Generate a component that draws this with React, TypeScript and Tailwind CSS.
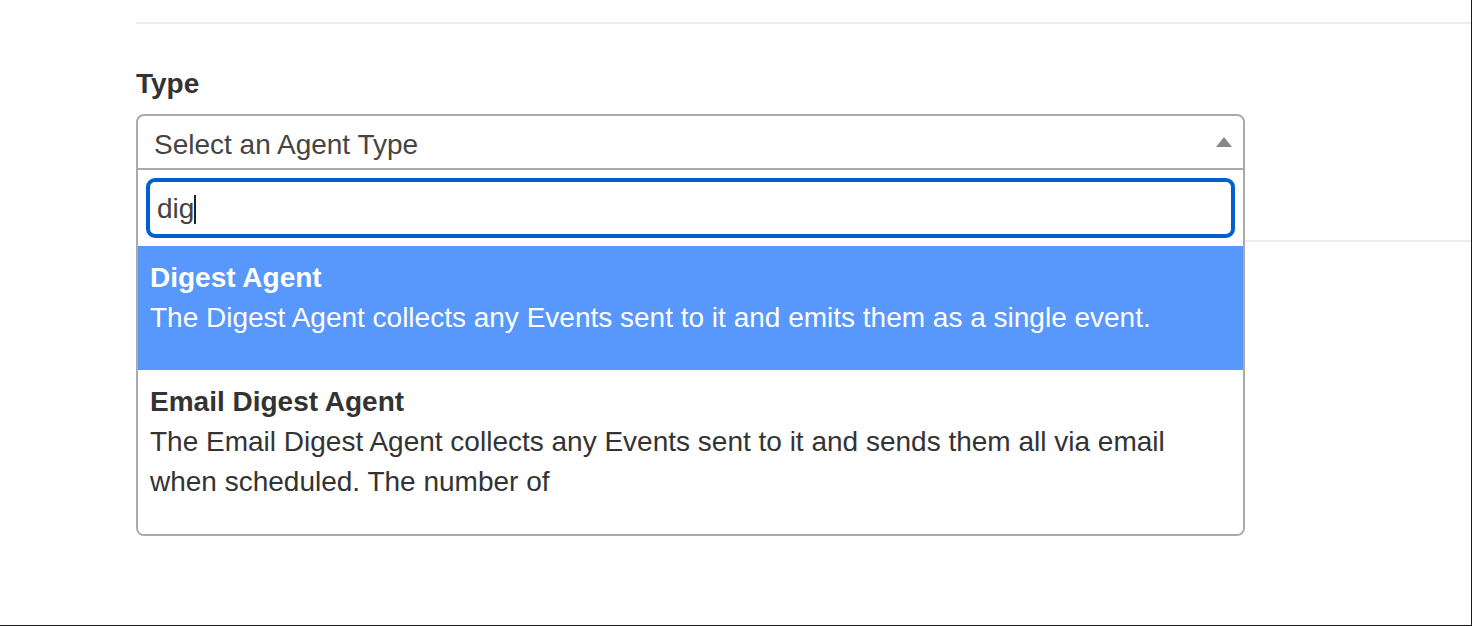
const options = [
  {
    title: "Digest Agent",
    lines: ["The Digest Agent collects any Events sent to it and emits them as a single event."],
    active: true,
  },
  {
    title: "Email Digest Agent",
    lines: [
      "The Email Digest Agent collects any Events sent to it and sends them all via email",
      "when scheduled. The number of",
    ],
    active: false,
  },
];

export default function App() {
  return (
    <div className="w-[1472px] h-[626px] overflow-hidden bg-white border-r border-b border-[#1c1c1c] font-['Liberation_Sans',Arial,sans-serif] text-[#333]">
      <div className="pl-[136px] pt-[22px]">
        <div className="h-[2px] bg-[#eeeeee]" />

        <div className="pt-[40px]">
          <label className="block text-[28px] leading-[40px] font-bold text-[#333] mb-[10px]">Type</label>

          <div className="relative w-[1109px] z-10">
            <div className="h-[56px] border-2 border-[#aaaaaa] rounded-t-[8px] flex items-center justify-between pl-[16px] pr-[11px] bg-white">
              <span className="text-[28px] leading-[40px] text-[#444] mt-[6px]">Select an Agent Type</span>
              <span className="w-0 h-0 border-l-[8px] border-r-[8px] border-b-[10px] border-l-transparent border-r-transparent border-b-[#888888]" />
            </div>

            <div className="absolute left-0 top-full w-full bg-white border-2 border-t-0 border-[#aaaaaa] rounded-b-[8px] overflow-hidden">
              <div className="p-[8px]">
                <div className="h-[60px] border-[4px] border-[#0060d0] rounded-[9px] flex items-center pl-[7px]">
                  <span className="text-[28px] leading-[40px] text-[#444] mt-[2px]">dig</span>
                  <span className="inline-block w-[2px] h-[29px] bg-[#222] mt-[2px]" />
                </div>
              </div>
              <ul>
                {options.map((o) => (
                  <li
                    key={o.title}
                    className={
                      o.active
                        ? "px-[12px] py-[12px] bg-[#5897fb] text-white"
                        : "px-[12px] py-[12px] bg-white text-[#333]"
                    }
                  >
                    <div className="text-[28px] leading-[40px] font-bold">{o.title}</div>
                    <p className="text-[28px] leading-[40px] mb-[20px]">
                      {o.lines.map((l, i) => (
                        <span key={i} className="block">
                          {l}
                        </span>
                      ))}
                    </p>
                  </li>
                ))}
              </ul>
            </div>
          </div>
        </div>

        <div className="mt-[70px] h-[2px] bg-[#eeeeee]" />
      </div>
    </div>
  );
}
